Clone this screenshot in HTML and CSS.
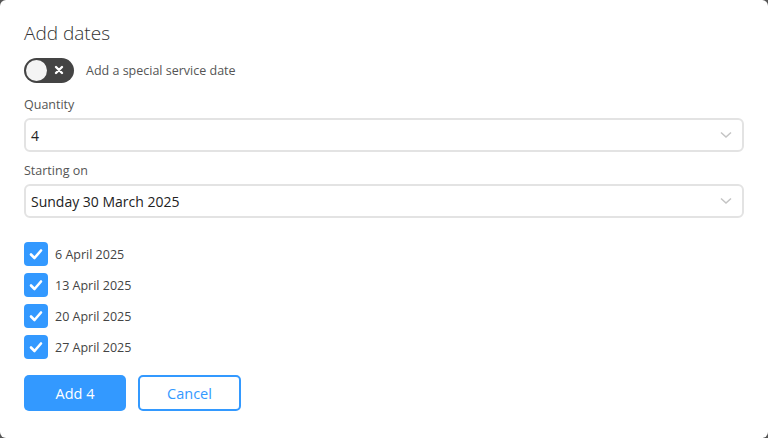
FILE: index.html
```html
<html>

<head>
	<title>Add dates</title>
	<link rel="stylesheet" href="styles.css">
</head>
<body>
	<div class="dialog">
		<h2 class="title">Add dates</h2>

		<div class="toggle-row">
			<span class="toggle">
				<span class="knob"></span>
				<svg class="cross" width="10" height="10" viewBox="0 0 10 10">
					<path d="M2 2 L8 8 M8 2 L2 8" stroke="#fff" stroke-width="2.4" stroke-linecap="round"/>
				</svg>
			</span>
			<span class="toggle-label">Add a special service date</span>
		</div>

		<div class="field">
			<label class="label">Quantity</label>
			<div class="select">
				<span>4</span>
				<svg class="chevron" width="12" height="8" viewBox="0 0 12 8">
					<path d="M1 1.5 L6 6 L11 1.5" fill="none" stroke="#c4c4c4" stroke-width="1.5"/>
				</svg>
			</div>
		</div>

		<div class="field">
			<label class="label">Starting on</label>
			<div class="select">
				<span>Sunday 30 March 2025</span>
				<svg class="chevron" width="12" height="8" viewBox="0 0 12 8">
					<path d="M1 1.5 L6 6 L11 1.5" fill="none" stroke="#c4c4c4" stroke-width="1.5"/>
				</svg>
			</div>
		</div>

		<ul class="dates">
			<li><span class="check"><svg width="16" height="16" viewBox="0 0 16 16"><path d="M3 8.5 L6.5 12 L13 4.5" fill="none" stroke="#fff" stroke-width="2.6" stroke-linecap="round" stroke-linejoin="round"/></svg></span>6 April 2025</li>
			<li><span class="check"><svg width="16" height="16" viewBox="0 0 16 16"><path d="M3 8.5 L6.5 12 L13 4.5" fill="none" stroke="#fff" stroke-width="2.6" stroke-linecap="round" stroke-linejoin="round"/></svg></span>13 April 2025</li>
			<li><span class="check"><svg width="16" height="16" viewBox="0 0 16 16"><path d="M3 8.5 L6.5 12 L13 4.5" fill="none" stroke="#fff" stroke-width="2.6" stroke-linecap="round" stroke-linejoin="round"/></svg></span>20 April 2025</li>
			<li><span class="check"><svg width="16" height="16" viewBox="0 0 16 16"><path d="M3 8.5 L6.5 12 L13 4.5" fill="none" stroke="#fff" stroke-width="2.6" stroke-linecap="round" stroke-linejoin="round"/></svg></span>27 April 2025</li>
		</ul>

		<div class="buttons">
			<button class="btn primary">Add 4</button>
			<button class="btn secondary">Cancel</button>
		</div>
	</div>
</body>
</html>
```

FILE: styles.css
```css
html, body{
	margin: 0;
	height: 100%;
}

body{
	font-family: 'Open Sans', 'Noto Sans', sans-serif;
	background-color: #555;
}

.dialog{
	box-sizing: border-box;
	height: 438px;
	background: #fff;
	border-radius: 6px;
	padding: 20px 24px 0 24px;
}

.title{
	margin: 0;
	font-size: 19px;
	font-weight: 300;
	color: #333;
	line-height: 26px;
}

.toggle-row{
	display: flex;
	align-items: center;
	margin-top: 11px;
	height: 26px;
}

.toggle{
	position: relative;
	display: inline-flex;
	align-items: center;
	box-sizing: border-box;
	width: 50px;
	height: 25px;
	border-radius: 13px;
	background: #444;
}

.knob{
	position: absolute;
	left: 2px;
	top: 2px;
	width: 21px;
	height: 21px;
	border-radius: 50%;
	background: #f4f4f4;
}

.cross{
	position: absolute;
	left: 30px;
	top: 7.5px;
}

.toggle-label{
	margin-left: 12px;
	font-size: 12.5px;
	color: #555;
}

.field{
	margin-top: 13px;
}

.field + .field{
	margin-top: 10px;
}

.label{
	display: block;
	font-size: 12.5px;
	color: #555;
	line-height: 18px;
	margin-bottom: 4px;
}

.select{
	display: flex;
	align-items: center;
	justify-content: space-between;
	box-sizing: border-box;
	height: 34px;
	border: 2px solid #e3e3e3;
	border-radius: 6px;
	padding: 0 10px 0 5px;
	font-size: 14px;
	color: #222;
}

.dates{
	list-style: none;
	margin: 24px 0 0 0;
	padding: 0;
}

.dates li{
	display: flex;
	align-items: center;
	height: 24px;
	margin-bottom: 7px;
	font-size: 12.5px;
	color: #444;
}

.dates li:last-child{
	margin-bottom: 0;
}

.check{
	display: inline-flex;
	align-items: center;
	justify-content: center;
	width: 24px;
	height: 24px;
	border-radius: 4px;
	background: #3399ff;
	margin-right: 7px;
}

.buttons{
	display: flex;
	gap: 12px;
	margin-top: 16px;
}

.btn{
	box-sizing: border-box;
	height: 36px;
	border-radius: 5px;
	font-family: inherit;
	font-size: 14.5px;
	cursor: pointer;
}

.primary{
	width: 102px;
	border: none;
	background: #3399ff;
	color: #fff;
}

.secondary{
	width: 103px;
	border: 2px solid #3399ff;
	background: #fff;
	color: #3399ff;
}
```
